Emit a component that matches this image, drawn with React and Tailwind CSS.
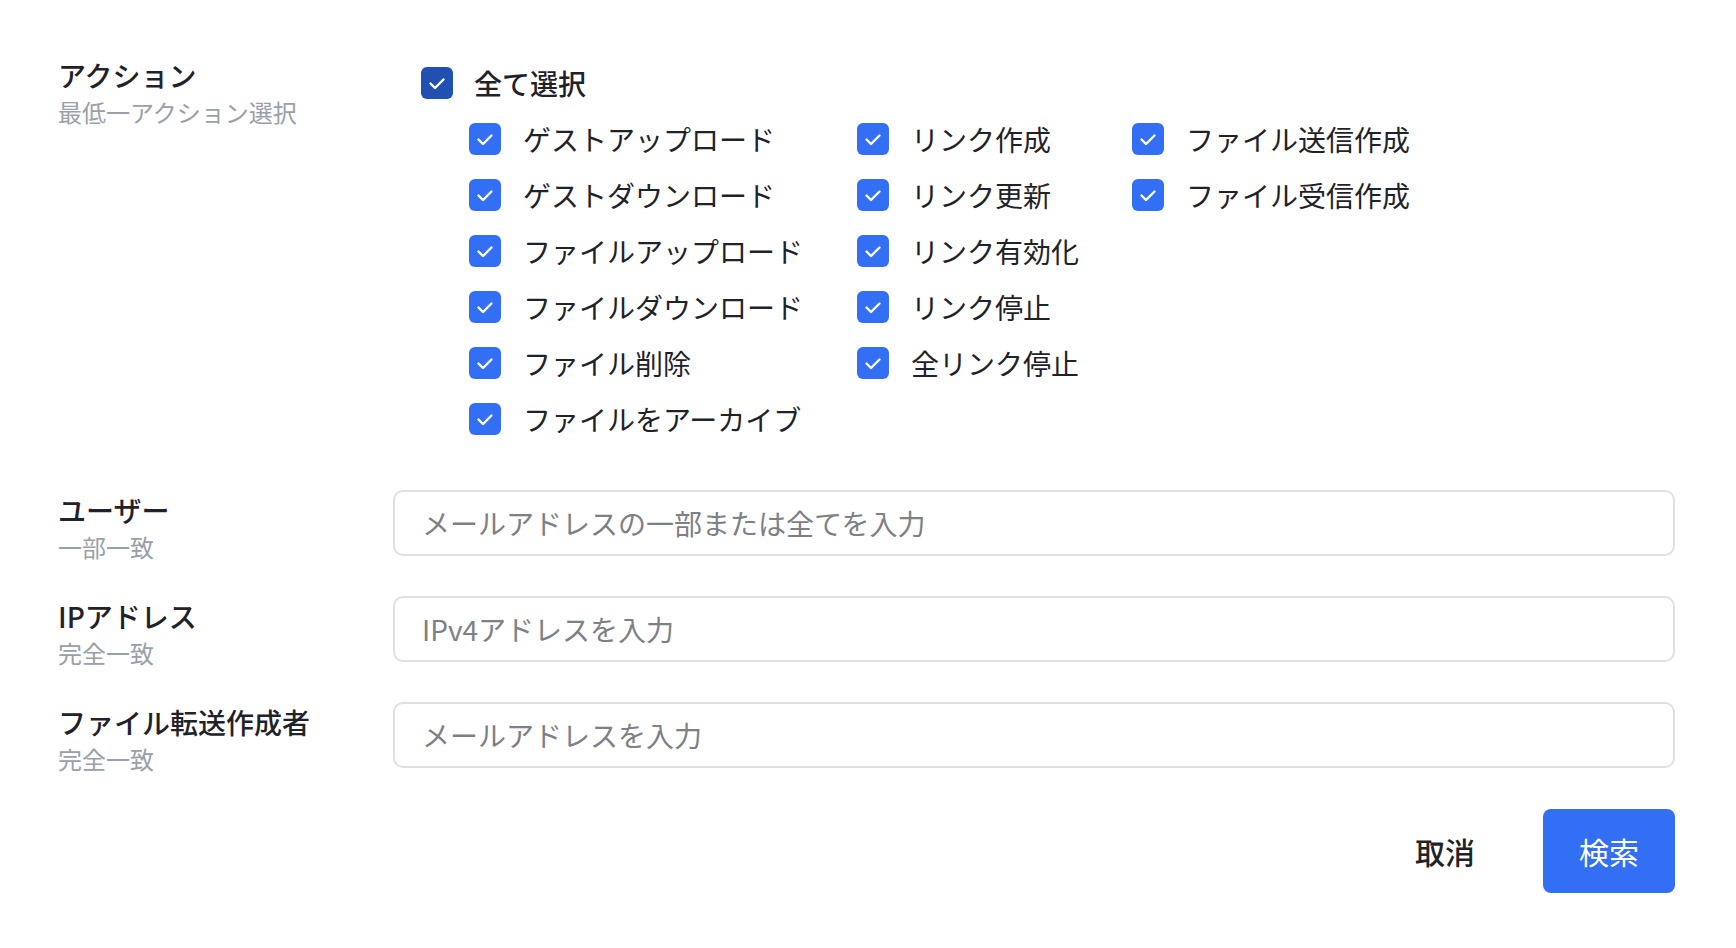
import React, { useState } from "react";

const font = { fontFamily: '"Noto Sans CJK JP", "Noto Sans", sans-serif' };

const columns = [
  ["ゲストアップロード", "ゲストダウンロード", "ファイルアップロード", "ファイルダウンロード", "ファイル削除", "ファイルをアーカイブ"],
  ["リンク作成", "リンク更新", "リンク有効化", "リンク停止", "全リンク停止"],
  ["ファイル送信作成", "ファイル受信作成"],
];

function Check({ checked, dark, onClick }) {
  return (
    <button
      type="button"
      onClick={onClick}
      className={`flex h-[32px] w-[32px] shrink-0 items-center justify-center rounded-[6px] ${
        checked ? (dark ? "bg-[#2150b3]" : "bg-[#326ff5]") : "border-2 border-[#d0d3d6] bg-white"
      }`}
    >
      {checked && (
        <svg width="32" height="32" viewBox="0 0 32 32" fill="none">
          <path d="M9.5 16.5l4.5 4.5 8.5-8.5" stroke="white" strokeWidth="2.4" strokeLinecap="round" strokeLinejoin="round" />
        </svg>
      )}
    </button>
  );
}

function FieldLabel({ title, sub }) {
  return (
    <div className="w-[335px] shrink-0">
      <div className="text-[28px] font-medium leading-[40px] text-[#1f2329]">{title}</div>
      <div className="text-[24px] leading-[34px] text-[#9aa0a8]">{sub}</div>
    </div>
  );
}

function TextRow({ title, sub, placeholder }) {
  return (
    <div className="flex items-start">
      <FieldLabel title={title} sub={sub} />
      <input
        type="text"
        placeholder={placeholder}
        className="h-[66px] flex-1 rounded-[10px] border-2 border-[#e0e0e0] px-[27px] text-[28px] text-[#1f2329] outline-none placeholder:text-[#7d8085]"
      />
    </div>
  );
}

export default function App() {
  const all = columns.flat();
  const [checked, setChecked] = useState(() => Object.fromEntries(all.map((a) => [a, true])));
  const allOn = all.every((a) => checked[a]);

  const toggleAll = () => setChecked(Object.fromEntries(all.map((a) => [a, !allOn])));
  const toggle = (a) => setChecked({ ...checked, [a]: !checked[a] });

  return (
    <div className="min-h-screen w-full bg-white pl-[58px] pr-[61px] pt-[55px]" style={font}>
      {/* actions */}
      <div className="flex items-start">
        <FieldLabel title="アクション" sub="最低一アクション選択" />
        <div className="pl-[28px]">
          <div className="flex h-[56px] items-center gap-[21px]">
            <Check checked={allOn} dark onClick={toggleAll} />
            <span className="text-[28px] font-medium text-[#1f2329]">全て選択</span>
          </div>
          <div className="flex pl-[48px]">
            {columns.map((col, i) => (
              <div key={i} className={i === 0 ? "w-[388px]" : i === 1 ? "w-[275px]" : ""}>
                {col.map((a) => (
                  <div key={a} className="flex h-[56px] items-center gap-[22px]">
                    <Check checked={checked[a]} onClick={() => toggle(a)} />
                    <span className="whitespace-nowrap text-[28px] text-[#1f2329]">{a}</span>
                  </div>
                ))}
              </div>
            ))}
          </div>
        </div>
      </div>

      <div className="mt-[43px] flex flex-col gap-[32px]">
        <TextRow title="ユーザー" sub="一部一致" placeholder="メールアドレスの一部または全てを入力" />
        <TextRow title="IPアドレス" sub="完全一致" placeholder="IPv4アドレスを入力" />
        <TextRow title="ファイル転送作成者" sub="完全一致" placeholder="メールアドレスを入力" />
      </div>

      <div className="mt-[33px] flex justify-end gap-[32px]">
        <button type="button" className="h-[84px] w-[132px] rounded-[8px] text-[30px] font-medium text-[#1f2329]">
          取消
        </button>
        <button type="button" className="h-[84px] w-[132px] rounded-[8px] bg-[#326ff5] text-[30px] text-white">
          検索
        </button>
      </div>
    </div>
  );
}
